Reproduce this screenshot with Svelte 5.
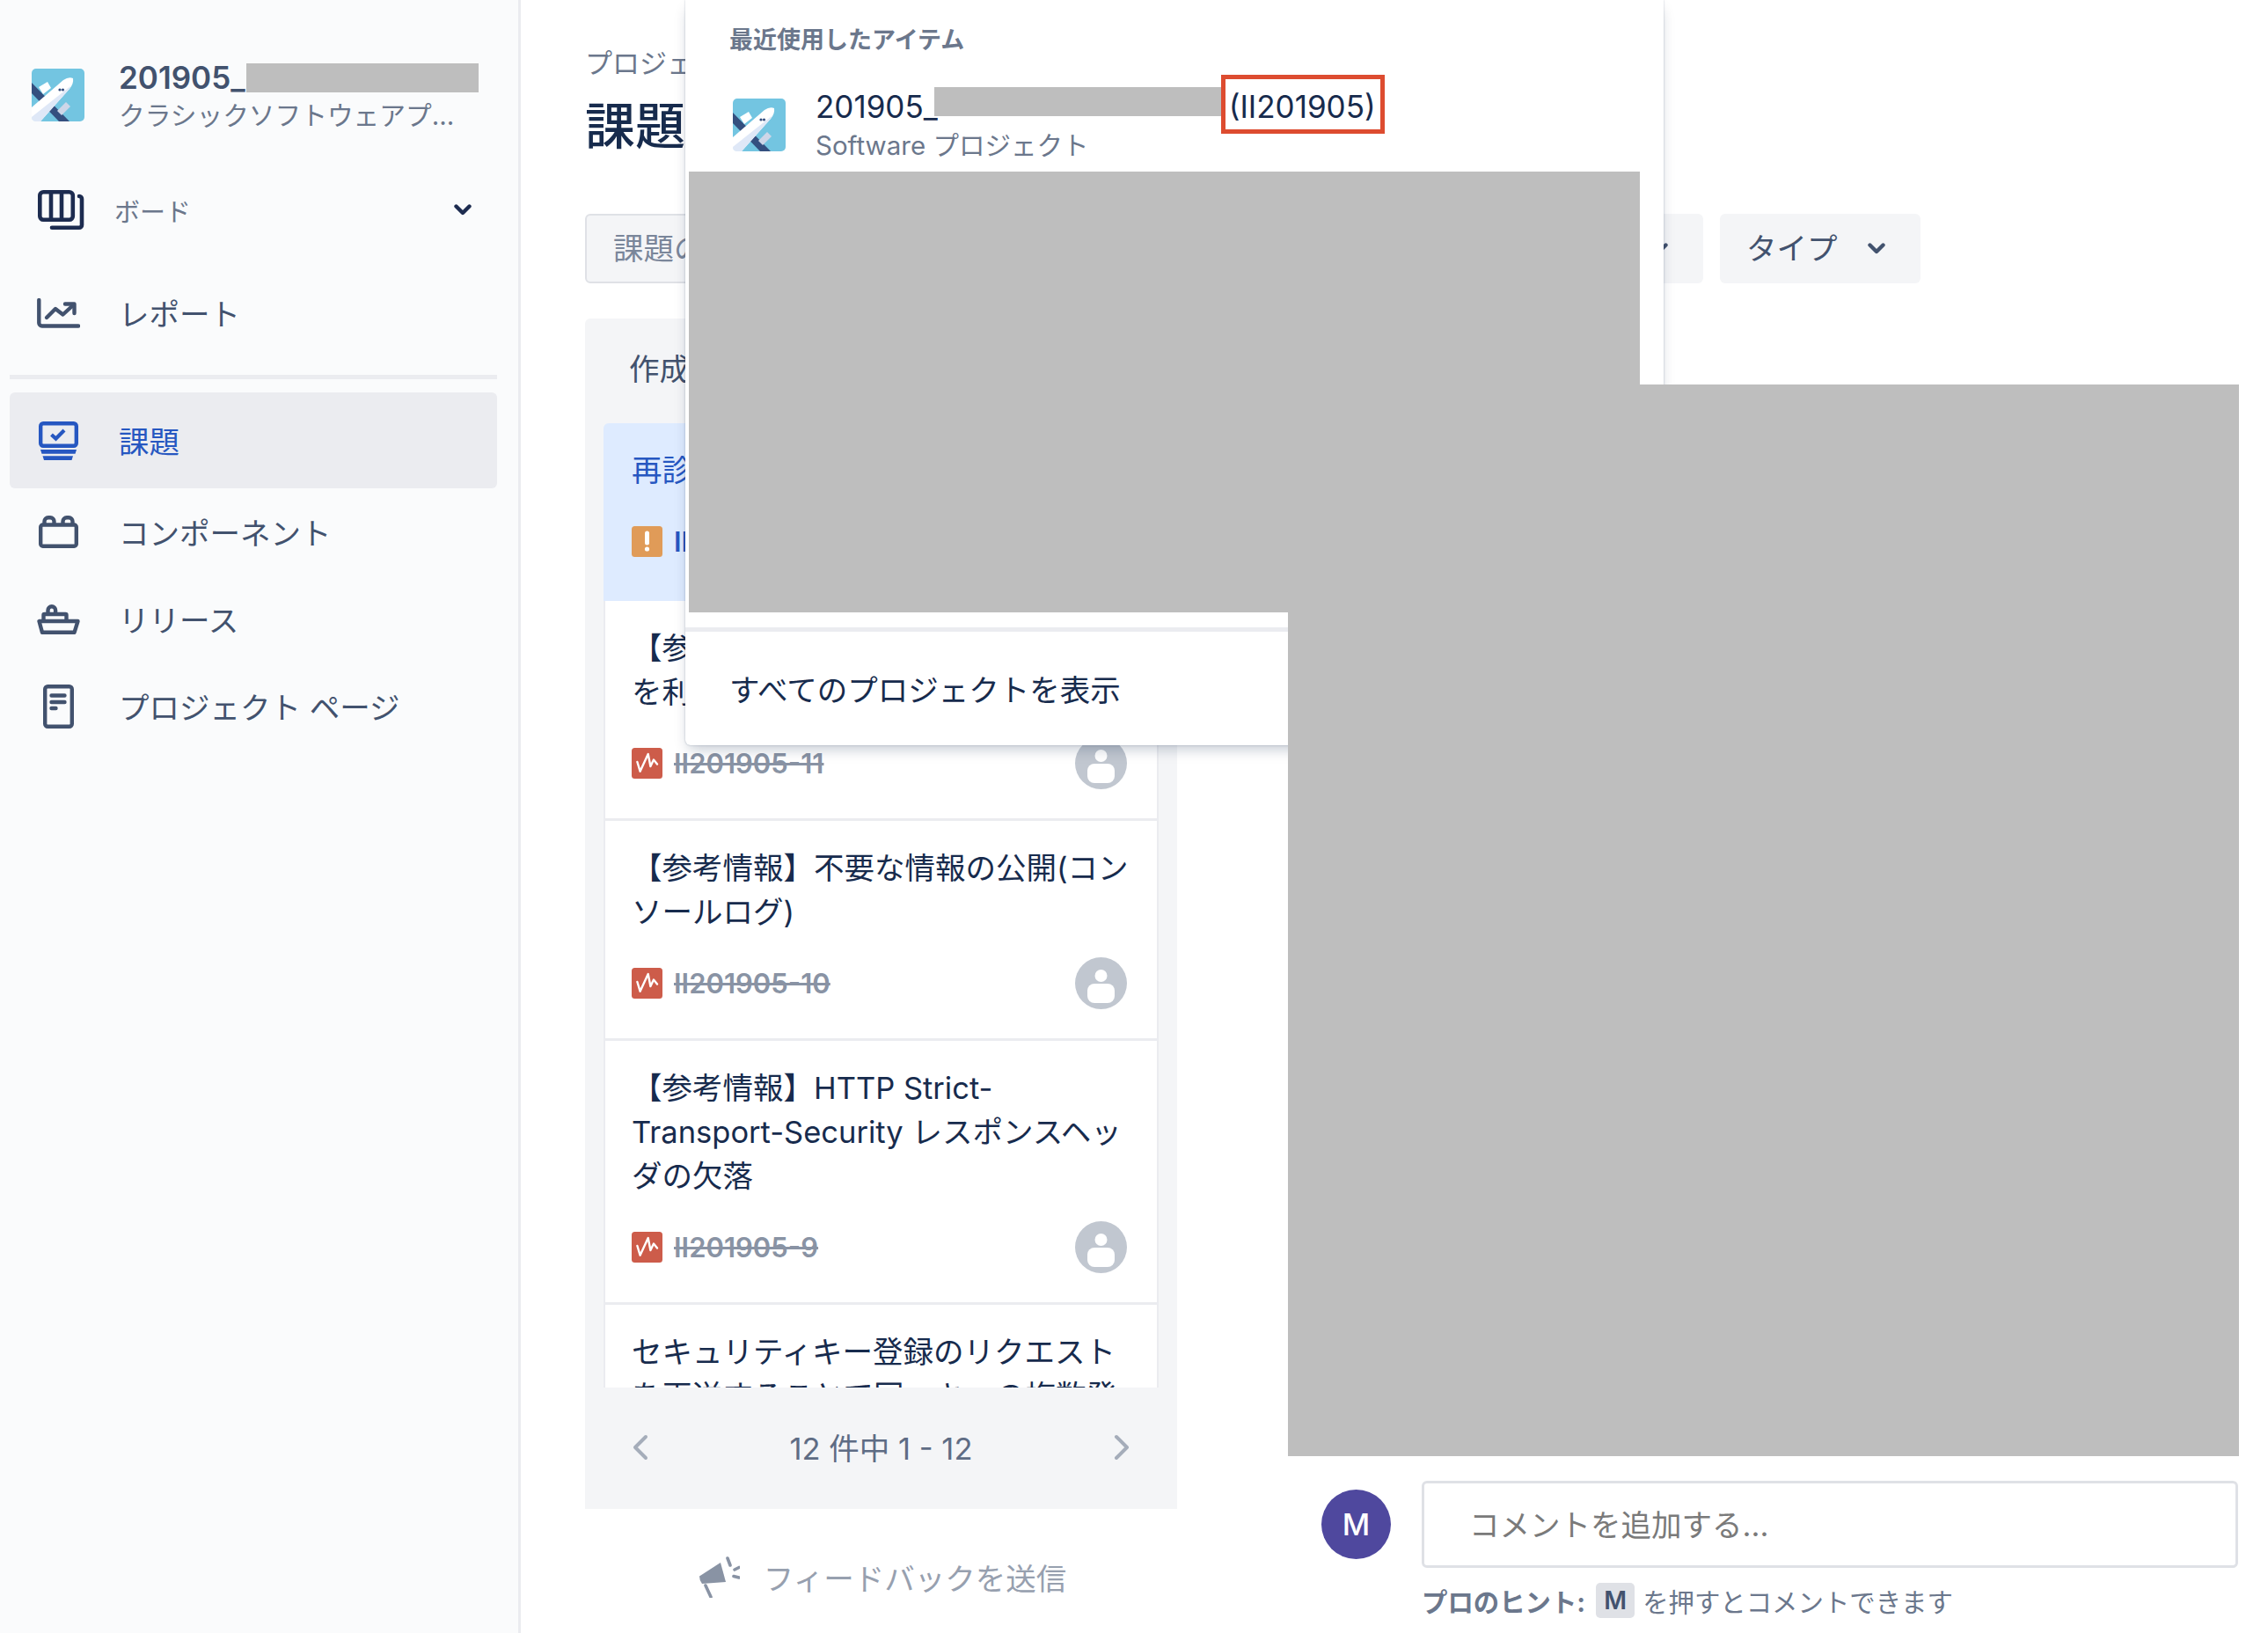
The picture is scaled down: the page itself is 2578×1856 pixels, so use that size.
<script>
  const cards = [
    { title: "再診", key: "II201905-12", type: "warn", active: true },
    { title: "【参考情報】\nを利", key: "II201905-11", type: "bug", done: true },
    { title: "【参考情報】不要な情報の公開(コンソールログ)", key: "II201905-10", type: "bug", done: true },
    { title: "【参考情報】HTTP Strict-Transport-Security レスポンスヘッダの欠落", key: "II201905-9", type: "bug", done: true },
    { title: "セキュリティキー登録のリクエストを再送することで同一キーの複数登", key: "II201905-8", type: "bug", done: true }
  ];
</script>

{#snippet logo()}
  <svg class="logo" viewBox="0 0 60 60">
    <rect width="60" height="60" rx="5" fill="#73c5e1" />
    <path d="M0 16 L0 28 L31 60 L43 60 Z" fill="#344f7f" />
    <path d="M8 21 L18 15 L22 22 L13 29 Z" fill="#fff" />
    <path d="M29 48 L39 38 L44 43 L34 53 Z" fill="#cdd6e8" />
    <path d="M0 44 L36 13 Q42 9 47 11 Q48 17 43 23 L10 60 H4 Q0 59 0 55 Z" fill="#fff" />
    <path d="M0 55 L44 20 Q44 21 43 23 L10 60 H4 Q0 59 0 55 Z" fill="#dfe8f7" />
    <circle cx="32" cy="24" r="1.6" fill="#344f7f" />
    <circle cx="35.5" cy="24" r="1.6" fill="#344f7f" />
  </svg>
{/snippet}

<div class="page">
  <aside class="sidebar">
    <div class="project">
      {@render logo()}
      <div class="project-text">
        <div class="project-name">201905_<span class="redact name-redact"></span></div>
        <div class="project-sub">クラシックソフトウェアプ...</div>
      </div>
    </div>

    <div class="nav-item board">
      <span class="nav-icon">
        <svg width="53" height="45" viewBox="0 0 53 45" fill="none" stroke="#1d2c50" stroke-width="4.6">
          <rect x="2.3" y="2.3" width="37.5" height="31.5" rx="4" />
          <path d="M15 2v32M27 2v32" />
          <path d="M47 7a3 3 0 0 1 3 3V39.7a3 3 0 0 1-3 3H16" stroke-linecap="round" />
        </svg>
      </span>
      <span class="board-label">ボード</span>
      <svg class="board-chev" width="20" height="13" viewBox="0 0 20 13" fill="none" stroke="#1d2c50" stroke-width="4.4" stroke-linecap="round" stroke-linejoin="round"><path d="M2.5 2.5 L10 10 L17.5 2.5" /></svg>
    </div>

    <div class="nav-item report">
      <span class="nav-icon">
        <svg width="49" height="34" viewBox="0 0 49 34" fill="none" stroke="#42526e" stroke-width="4.4" stroke-linecap="round" stroke-linejoin="round">
          <path d="M2.3 2V28a3.5 3.5 0 0 0 3.5 3.5H47" />
          <path d="M11 22 L21 12 L29.5 18.5 L41 8" />
          <path d="M32 6.5 H42.5 V17" />
        </svg>
      </span>
      <span class="nav-label">レポート</span>
    </div>

    <div class="divider"></div>

    <div class="nav-item active">
      <span class="nav-icon">
        <svg width="45" height="44" viewBox="0 0 45 44" fill="none" stroke="#2657c1" stroke-width="4.4">
          <rect x="2.2" y="2.2" width="40.6" height="25.6" rx="3" />
          <path d="M14.5 15 L19.5 19.5 L29 10" stroke-width="4.2" />
          <path d="M2 32H43L41.5 36.7H3.5Z" fill="#2657c1" stroke="none" />
          <path d="M4.5 39.3H39L37.5 44H6Z" fill="#2657c1" stroke="none" />
        </svg>
      </span>
      <span class="nav-label">課題</span>
    </div>

    <div class="nav-item">
      <span class="nav-icon">
        <svg width="45" height="37" viewBox="0 0 45 37" fill="none" stroke="#42526e" stroke-width="4.4">
          <rect x="2.2" y="10.5" width="40.6" height="24.3" rx="2.5" />
          <path d="M6.5 10.5V6.5a4.3 4.3 0 0 1 4.3-4.3h2.4a4.3 4.3 0 0 1 4.3 4.3v4" />
          <path d="M27.5 10.5V6.5a4.3 4.3 0 0 1 4.3-4.3h2.4a4.3 4.3 0 0 1 4.3 4.3v4" />
        </svg>
      </span>
      <span class="nav-label">コンポーネント</span>
    </div>

    <div class="nav-item">
      <span class="nav-icon">
        <svg width="49" height="34" viewBox="0 0 49 34" fill="none" stroke="#42526e" stroke-width="4.4" stroke-linejoin="round">
          <path d="M2.5 19H46.5L42.5 31.8H6Z" />
          <path d="M7.5 19V12a1 1 0 0 1 1-1H32.5a1 1 0 0 1 1 1V19" />
          <path d="M12.5 11V6.5a4.3 4.3 0 0 1 8.6 0V11" />
        </svg>
      </span>
      <span class="nav-label">リリース</span>
    </div>

    <div class="nav-item">
      <span class="nav-icon">
        <svg width="35" height="50" viewBox="0 0 35 50" fill="none" stroke="#42526e" stroke-width="4.4">
          <rect x="2.2" y="2.2" width="30.6" height="45.6" rx="3" />
          <path d="M9.5 12.5H24.5M9.5 20H24.5M9.5 27H14.5" stroke-linecap="round" />
        </svg>
      </span>
      <span class="nav-label">プロジェクト ページ</span>
    </div>
  </aside>

  <main class="main">
    <div class="crumb">プロジェクト</div>
    <h1 class="title">課題</h1>

    <div class="filters">
      <div class="search">課題の検索</div>
      <div class="filter prev">
        <svg width="20" height="13" viewBox="0 0 20 13" fill="none" stroke="#42526e" stroke-width="4.4" stroke-linecap="round" stroke-linejoin="round"><path d="M2.5 2.5 L10 10 L17.5 2.5" /></svg>
      </div>
      <div class="filter type">タイプ
        <svg width="20" height="13" viewBox="0 0 20 13" fill="none" stroke="#42526e" stroke-width="4.4" stroke-linecap="round" stroke-linejoin="round"><path d="M2.5 2.5 L10 10 L17.5 2.5" /></svg>
      </div>
    </div>

    <div class="content">
      <div class="left">
        <section class="panel">
          <div class="panel-head">作成日</div>
          <div class="list">
            {#each cards as card}
              <article class="card" class:active={card.active}>
                <div class="card-title">{card.title}</div>
                <div class="card-foot">
                  {#if card.type === "bug"}
                    <svg class="type-icon" viewBox="0 0 35 35">
                      <rect width="35" height="35" rx="3.5" fill="#cd5c4a" />
                      <path d="M6.4 16 L9.6 26.7 L18.7 7 L21.4 21 L25 13.5 L29 18.5" fill="none" stroke="#fff" stroke-width="2.4" stroke-linejoin="round" stroke-linecap="round" />
                    </svg>
                  {:else}
                    <svg class="type-icon" viewBox="0 0 35 35">
                      <rect width="35" height="35" rx="3.5" fill="#e09b58" />
                      <path d="M17.5 8 V19" stroke="#fff" stroke-width="5" stroke-linecap="round" />
                      <circle cx="17.5" cy="26" r="2.6" fill="#fff" />
                    </svg>
                  {/if}
                  <span class="key" class:done={card.done}>{card.key}</span>
                  <svg class="assignee" viewBox="0 0 59 59">
                    <circle cx="29.5" cy="29.5" r="29.5" fill="#c1c7d0" />
                    <circle cx="29.5" cy="21" r="7" fill="#fff" />
                    <rect x="14" y="30" width="31" height="22" rx="8" fill="#fff" />
                  </svg>
                </div>
              </article>
            {/each}
          </div>
          <div class="pager">
            <svg width="19" height="30" viewBox="0 0 19 30" fill="none" stroke="#a5adba" stroke-width="4" stroke-linecap="round" stroke-linejoin="round"><path d="M16 3 L4 15 L16 27" /></svg>
            <span>12 件中 1 - 12</span>
            <svg width="19" height="30" viewBox="0 0 19 30" fill="none" stroke="#a5adba" stroke-width="4" stroke-linecap="round" stroke-linejoin="round"><path d="M3 3 L15 15 L3 27" /></svg>
          </div>
        </section>
        <div class="feedback">
          <svg width="46" height="47" viewBox="0 0 46 47" fill="#8993a4">
            <path d="M0 22.4 L24 7 L30 29 L3 31 Q0 27 0 22.4 Z" />
            <path d="M7 33 L13 46" stroke="#8993a4" stroke-width="3.6" stroke-linecap="round" />
            <path d="M32 2 L35 10 M45 12.5 L40 15 M45 24 L39 22.5" stroke="#8993a4" stroke-width="3.6" stroke-linecap="round" />
          </svg>
          <span>フィードバックを送信</span>
        </div>
      </div>

      <div class="detail">
        <div class="comment-row">
          <div class="me">M</div>
          <div class="comment-input">コメントを追加する...</div>
        </div>
        <div class="hint"><b>プロのヒント:</b><kbd>M</kbd>を押すとコメントできます</div>
      </div>
    </div>
  </main>

  <div class="dropdown">
    <div class="drop-head">最近使用したアイテム</div>
    <div class="drop-row">
      {@render logo()}
      <div class="drop-text">
        <div class="drop-name"><span class="drop-num">201905_</span><span class="redact row-redact"></span><span class="marked">(II201905)</span></div>
        <div class="drop-sub">Software プロジェクト</div>
      </div>
    </div>
    <div class="redact drop-redact"></div>
    <div class="drop-divider"></div>
    <div class="drop-link">すべてのプロジェクトを表示</div>
  </div>

  <div class="redact big-redact"></div>
</div>

<style>
  :global(body) {
    margin: 0;
    background: #fff;
  }
  .page {
    position: relative;
    display: flex;
    width: 2578px;
    height: 1856px;
    overflow: hidden;
    font-family: Inter, "Noto Sans CJK JP", sans-serif;
    font-size: 34.5px;
    color: #172b4d;
  }
  .redact {
    background: #bebebe;
  }
  .sidebar {
    box-sizing: border-box;
    flex: 0 0 592px;
    height: 100%;
    padding-top: 69px;
    background: #fafbfc;
    border-right: 3px solid #ebecf0;
    color: #42526e;
  }
  .project {
    display: flex;
    align-items: center;
    padding-left: 36px;
    height: 77px;
    margin-bottom: 43px;
  }
  .logo {
    flex: none;
    width: 60px;
    height: 60px;
  }
  .project-text {
    margin: 5px 0 0 39px;
  }
  .project-name {
    display: flex;
    height: 33px;
    line-height: 33px;
    font-weight: 600;
    font-size: 35px;
  }
  .name-redact {
    display: block;
    width: 264px;
    height: 33px;
    margin-left: 1px;
  }
  .project-sub {
    margin-top: 8px;
    line-height: 36px;
    font-size: 29.7px;
    color: #6b778c;
    white-space: nowrap;
  }
  .nav-item {
    display: flex;
    align-items: center;
    box-sizing: border-box;
    width: 554px;
    height: 99px;
    margin-left: 11px;
    padding-left: 25px;
    border-radius: 6px;
  }
  .nav-icon {
    display: flex;
    flex: none;
    align-items: center;
    justify-content: center;
    width: 60px;
    margin-right: 39px;
  }
  .nav-label {
    margin-top: -2px;
  }
  .board .nav-icon {
    justify-content: flex-end;
    margin-right: 34px;
  }
  .board-label {
    font-size: 29px;
    color: #6b778c;
  }
  .board-chev {
    margin-left: auto;
    margin-right: 29px;
  }
  .report {
    margin-top: 18px;
  }
  .divider {
    width: 554px;
    height: 5px;
    margin: 21px 0 15px 11px;
    background: #ebecf0;
  }
  .nav-item.active {
    height: 109px;
    background: #ebecf0;
    color: #2657c1;
  }
  .main {
    flex: 1;
    min-width: 0;
    padding: 50px 0 0 73px;
  }
  .crumb {
    height: 44px;
    line-height: 44px;
    font-size: 31px;
    color: #6b778c;
  }
  .title {
    height: 70px;
    margin: 15px 0 0;
    line-height: 70px;
    font-size: 57px;
    font-weight: 500;
  }
  .filters {
    display: flex;
    gap: 19px;
    width: 1518px;
    height: 79px;
    margin-top: 64px;
  }
  .search {
    flex: 1;
    box-sizing: border-box;
    padding-left: 30px;
    line-height: 75px;
    background: #f4f5f7;
    border: 2px solid #dfe1e6;
    border-radius: 6px;
    color: #7a869a;
  }
  .filter {
    display: flex;
    flex: 0 0 228px;
    align-items: center;
    justify-content: space-between;
    box-sizing: border-box;
    padding: 0 40px 0 30px;
    line-height: 75px;
    background: #f4f5f7;
    border-radius: 6px;
    color: #42526e;
  }
  .filter.prev {
    flex-basis: 230px;
    justify-content: flex-end;
  }
  .content {
    display: flex;
    margin-top: 40px;
  }
  .left {
    flex: 0 0 673px;
  }
  .panel {
    display: flex;
    flex-direction: column;
    height: 1353px;
    background: #f4f5f7;
    border-radius: 6px 6px 0 0;
  }
  .panel-head {
    flex: none;
    height: 119px;
    padding-left: 50px;
    line-height: 116px;
    color: #42526e;
  }
  .list {
    flex: none;
    height: 1096px;
    margin: 0 21px;
    overflow: hidden;
  }
  .card {
    box-sizing: border-box;
    padding: 29px 34px 33px 30px;
    background: #fff;
    border: solid #ebecf0;
    border-width: 0 2px 3px;
  }
  .card.active {
    min-height: 202px;
    background: #deebff;
    border-color: #deebff;
    border-radius: 6px 6px 0 0;
    color: #2657c1;
  }
  .card-title {
    margin-right: -4px;
    line-height: 50px;
    white-space: pre-line;
  }
  .card-foot {
    display: flex;
    align-items: center;
    height: 59px;
    margin-top: 26px;
  }
  .type-icon {
    flex: none;
    width: 35px;
    height: 35px;
  }
  .key {
    margin-left: 13px;
    font-size: 31px;
    font-weight: 600;
    color: #2657c1;
  }
  .key.done {
    color: #8993a4;
    text-decoration: line-through;
  }
  .assignee {
    flex: none;
    width: 59px;
    height: 59px;
    margin-left: auto;
  }
  .pager {
    display: flex;
    flex: 1;
    align-items: center;
    justify-content: space-between;
    padding: 0 53px;
    color: #5e6c84;
  }
  .pager span {
    margin-top: -5px;
  }
  .pager svg {
    margin-top: -3px;
  }
  .feedback {
    display: flex;
    align-items: center;
    justify-content: center;
    gap: 27px;
    height: 154px;
    padding-left: 4px;
    color: #97a0af;
  }
  .detail {
    padding: 1321px 0 0 164px;
  }
  .comment-row {
    display: flex;
    align-items: center;
    gap: 35px;
  }
  .me {
    flex: none;
    width: 79px;
    height: 79px;
    border-radius: 50%;
    background: #4f489e;
    color: #fff;
    font-weight: 500;
    line-height: 79px;
    text-align: center;
  }
  .comment-input {
    box-sizing: border-box;
    width: 928px;
    height: 99px;
    padding-left: 51px;
    line-height: 95px;
    border: 3px solid #dfe1e6;
    border-radius: 6px;
    color: #7a7a7a;
  }
  .hint {
    display: flex;
    align-items: center;
    height: 40px;
    margin: 17px 0 0 114px;
    font-size: 29.4px;
    color: #6b778c;
    white-space: nowrap;
  }
  .hint b {
    font-weight: 700;
  }
  kbd {
    width: 44px;
    height: 40px;
    margin: 0 9px 0 12px;
    border-radius: 5px;
    background: #dfe1e6;
    color: #42526e;
    font: 600 28px/40px Inter, sans-serif;
    text-align: center;
  }
  .dropdown {
    position: absolute;
    top: 0;
    left: 779px;
    display: flex;
    flex-direction: column;
    width: 1112px;
    height: 847px;
    background: #fff;
    border-radius: 0 0 6px 6px;
    box-shadow: 0 8px 16px -4px rgba(9, 30, 66, 0.25), 0 0 2px rgba(9, 30, 66, 0.31);
  }
  .drop-head {
    height: 85px;
    padding-left: 50px;
    line-height: 92px;
    font-size: 27px;
    font-weight: 700;
    color: #6b778c;
  }
  .drop-row {
    display: flex;
    align-items: flex-start;
    height: 110px;
    padding-left: 54px;
    box-sizing: border-box;
  }
  .drop-row .logo {
    margin-top: 27px;
  }
  .drop-text {
    margin-left: 34px;
  }
  .drop-name {
    display: flex;
    align-items: center;
    height: 67px;
    font-size: 35px;
  }
  .drop-num {
    margin-top: 4px;
  }
  .row-redact {
    width: 326px;
    height: 33px;
    margin: -7px 0 0 -4px;
  }
  .marked {
    box-sizing: border-box;
    width: 186px;
    height: 67px;
    line-height: 62px;
    padding-left: 4px;
    border: 5px solid #dd4c30;
    white-space: nowrap;
  }
  .drop-sub {
    margin-top: -5px;
    line-height: 36px;
    font-size: 29.5px;
    color: #6b778c;
  }
  .drop-redact {
    width: 1081px;
    height: 501px;
    margin-left: 4px;
    flex: none;
  }
  .drop-divider {
    height: 5px;
    margin-top: 17px;
    background: #ebecf0;
  }
  .drop-link {
    padding: 42px 0 0 50px;
    line-height: 50px;
  }
  .big-redact {
    position: absolute;
    top: 437px;
    left: 1464px;
    width: 1081px;
    height: 1218px;
  }
</style>
